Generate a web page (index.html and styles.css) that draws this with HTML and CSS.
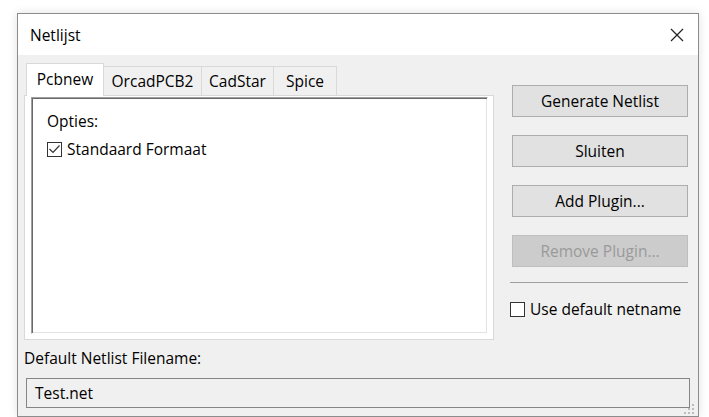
FILE: index.html
```html
<!DOCTYPE html>
<html lang="nl">
<head>
<meta charset="utf-8">
<title>Netlijst</title>
<link rel="stylesheet" href="styles.css">
</head>
<body>
<div class="desk">
  <div class="dialog">
    <div class="titlebar">
      <span class="title">Netlijst</span>
      <span class="close">
        <svg width="14" height="14" viewBox="0 0 14 14"><path d="M1 1L13 13M13 1L1 13" stroke="#222" stroke-width="1.2" fill="none"/></svg>
      </span>
    </div>
    <div class="client">
      <div class="top">
        <div class="notebook">
          <div class="tabs">
            <div class="tab tab-pcbnew active">Pcbnew</div>
            <div class="tab tab-orcad">OrcadPCB2</div>
            <div class="tab tab-cadstar">CadStar</div>
            <div class="tab tab-spice">Spice</div>
          </div>
          <div class="page">
            <div class="pane">
              <div class="caption">Opties:</div>
              <label class="check">
                <span class="box">
                  <svg width="13" height="13" viewBox="0 0 13 13"><path d="M1.5 6L5 9.5L11.5 2.5" stroke="#333" stroke-width="1.2" fill="none"/></svg>
                </span>
                <span>Standaard Formaat</span>
              </label>
            </div>
          </div>
        </div>
        <div class="actions">
          <button class="btn btn-first">Generate Netlist</button>
          <button class="btn">Sluiten</button>
          <button class="btn">Add Plugin...</button>
          <button class="btn" disabled>Remove Plugin...</button>
          <div class="sep"></div>
          <label class="check check-net">
            <span class="box"></span>
            <span>Use default netname</span>
          </label>
        </div>
      </div>
      <div class="filename">
        <div class="caption">Default Netlist Filename:</div>
        <div class="field">Test.net</div>
      </div>
    </div>
    <div class="grip">
      <svg width="10" height="10" viewBox="0 0 10 10" fill="#bdbdbd">
        <rect x="8" y="0" width="2" height="2"/>
        <rect x="4" y="4" width="2" height="2"/><rect x="8" y="4" width="2" height="2"/>
        <rect x="0" y="8" width="2" height="2"/><rect x="4" y="8" width="2" height="2"/><rect x="8" y="8" width="2" height="2"/>
      </svg>
    </div>
  </div>
</div>
</body>
</html>
```

FILE: styles.css
```css
* { box-sizing: border-box; }

html, body {
  margin: 0;
  background: #ffffff;
}

body {
  font-family: "Open Sans", "Noto Sans", "Liberation Sans", sans-serif;
  font-size: 15.5px;
  color: #000;
  width: 709px;
  height: 417px;
  overflow: hidden;
}

.desk {
  padding: 13px 0 0 17px;
}

.dialog {
  position: relative;
  width: 682px;
  height: 404px;
  border: 1px solid #8c8c8c;
  background: #f0f0f0;
  box-shadow: 0 0 9px rgba(0, 0, 0, 0.12);
  display: flex;
  flex-direction: column;
}

/* window caption */
.titlebar {
  height: 41px;
  background: #ffffff;
  display: flex;
  align-items: center;
  padding-left: 12px;
}

.title {
  line-height: 20px;
}

.close {
  margin-left: auto;
  margin-right: 14px;
  width: 14px;
  height: 14px;
  display: flex;
}

/* dialog body */
.client {
  flex: 1;
  display: flex;
  flex-direction: column;
  padding: 8px 0 0 6px;
}

.top {
  display: flex;
  gap: 16px;
}

/* notebook with tabs */
.notebook {
  width: 470px;
}

.tabs {
  height: 32px;
  display: flex;
  align-items: flex-end;
  padding-left: 2px;
}

.tab {
  height: 29px;
  display: flex;
  align-items: center;
  justify-content: center;
  background: #f0f0f0;
  border: 1px solid #d9d9d9;
  border-bottom: none;
  margin-left: -1px;
  line-height: 20px;
}

.tab.active {
  height: 33px;
  margin-bottom: -1px;
  margin-left: 0;
  background: #ffffff;
  position: relative;
  z-index: 1;
  padding-bottom: 3px;
}

.tab-pcbnew { width: 78px; }
.tab-orcad { width: 99px; }
.tab-cadstar { width: 73px; }
.tab-spice { width: 64px; }

.page {
  height: 245px;
  background: #ffffff;
  border: 1px solid #d9d9d9;
  padding: 1px 5px 5px 6px;
  display: flex;
}

/* sunken panel inside the page */
.pane {
  flex: 1;
  border-top: 1px solid #a0a0a0;
  border-left: 1px solid #a0a0a0;
  border-right: 1px solid #ffffff;
  border-bottom: 1px solid #ffffff;
  box-shadow: inset 1px 1px 0 #696969, inset -1px -1px 0 #e3e3e3;
  padding: 13px 0 0 15px;
}

.caption {
  line-height: 20px;
}

.check {
  display: flex;
  align-items: center;
  gap: 5px;
  line-height: 20px;
  margin-top: 8px;
}

.box {
  width: 15px;
  height: 15px;
  border: 1px solid #333333;
  background: #ffffff;
  display: flex;
  align-items: center;
  justify-content: center;
}

/* buttons column */
.actions {
  width: 178px;
  padding-top: 22px;
  display: flex;
  flex-direction: column;
}

.btn {
  width: 176px;
  height: 32px;
  margin-left: 2px;
  margin-bottom: 18px;
  border: 1px solid #adadad;
  background: #e1e1e1;
  font-family: inherit;
  font-size: 15.5px;
  color: #000;
  padding: 0;
}

.btn:disabled {
  background: #cccccc;
  border-color: #bfbfbf;
  color: #9a9a9a;
  margin-bottom: 15px;
}

.sep {
  height: 1px;
  background: #a0a0a0;
}

.check-net {
  margin-top: 16px;
}

/* filename row */
.filename {
  margin-top: 8px;
}

.field {
  margin: 10px 0 0 2px;
  width: 664px;
  height: 30px;
  border: 1px solid #858585;
  background: #f0f0f0;
  padding-left: 8px;
  display: flex;
  align-items: center;
}

/* size grip overlay at the corner */
.grip {
  position: absolute;
  right: 4px;
  bottom: 2px;
  display: flex;
}
```
